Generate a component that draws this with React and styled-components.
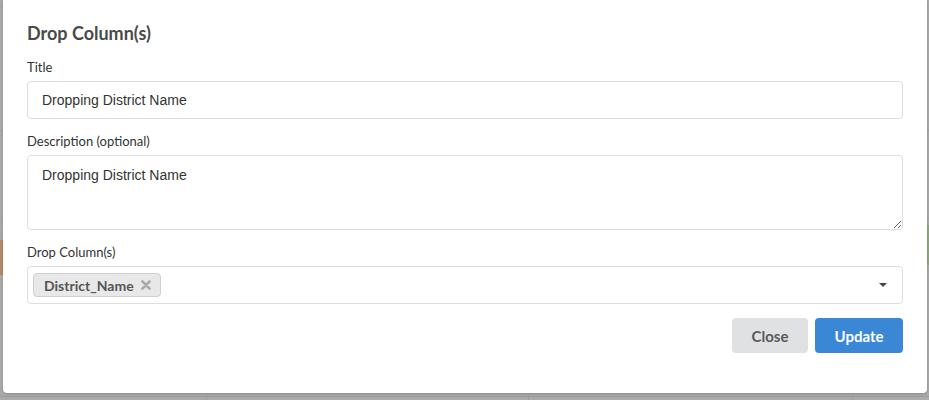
import React from 'react';
import styled, { createGlobalStyle } from 'styled-components';

const GlobalStyle = createGlobalStyle`
  html, body {
    margin: 0;
    padding: 0;
    width: 929px;
    height: 400px;
    overflow: hidden;
  }
  * {
    box-sizing: border-box;
  }
`;

const Backdrop = styled.div`
  position: relative;
  width: 929px;
  height: 400px;
  background: #aaaaaa;
  overflow: hidden;
`;

const BackStripe = styled.div`
  position: absolute;
  left: ${({ side }) => (side === 'right' ? '900px' : '0')};
  width: ${({ side }) => (side ? '29px' : '100%')};
  top: ${({ top }) => top}px;
  height: ${({ h }) => h || 1}px;
  background: ${({ color }) => color || '#9f9f9f'};
`;

const BottomRow = styled.div`
  position: absolute;
  left: 0;
  right: 0;
  top: 396px;
  height: 4px;
  display: grid;
  grid-template-columns: 206px 322px 324px 1fr;
  border-top: 1px solid #9c9c9c;
  div + div {
    border-left: 1px solid #9c9c9c;
  }
`;

const Modal = styled.div`
  position: absolute;
  left: 3px;
  top: 0;
  width: 924px;
  height: 393px;
  background: #ffffff;
  border-radius: 0 0 4px 4px;
  box-shadow: 0 1px 3px rgba(0, 0, 0, 0.2);
  padding: 20px 24px 0 24px;
  font-family: Lato, 'Noto Sans', sans-serif;
  color: #333333;
`;

const Heading = styled.h2`
  margin: 0 0 13px 0;
  font-size: 18px;
  line-height: 26px;
  font-weight: 700;
  color: #4a4a4a;
`;

const Field = styled.div`
  display: flex;
  flex-direction: column;
  margin-bottom: ${({ gap }) => gap}px;
`;

const Label = styled.label`
  font-size: 13px;
  line-height: 17px;
  color: #333333;
  margin-bottom: 5px;
`;

const TextInput = styled.input`
  height: 38px;
  width: 100%;
  border: 1px solid #dedede;
  border-radius: 4px;
  padding: 0 14px;
  font-family: 'Liberation Sans', Arial, sans-serif;
  font-size: 14px;
  color: #333333;
  outline: none;
`;

const TextArea = styled.textarea`
  display: block;
  height: 75px;
  width: 100%;
  border: 1px solid #dedede;
  border-radius: 4px;
  padding: 10px 14px;
  font-family: 'Liberation Sans', Arial, sans-serif;
  font-size: 14px;
  line-height: 18px;
  color: #333333;
  resize: vertical;
  outline: none;
`;

const Select = styled.div`
  height: 38px;
  width: 100%;
  border: 1px solid #dedede;
  border-radius: 4px;
  padding: 0 15px 0 5px;
  display: flex;
  align-items: center;
  justify-content: space-between;
`;

const Tag = styled.span`
  display: inline-flex;
  align-items: center;
  gap: 7px;
  height: 24px;
  padding: 0 9px 0 10px;
  background: #e8e8e8;
  border: 1px solid #cfcfcf;
  border-radius: 4px;
  font-size: 14px;
  font-weight: 700;
  color: #555555;
`;

const TagRemove = styled.svg`
  width: 10px;
  height: 10px;
  display: block;
`;

const Caret = styled.span`
  width: 0;
  height: 0;
  border-left: 4px solid transparent;
  border-right: 4px solid transparent;
  border-top: 4px solid #444444;
`;

const Actions = styled.div`
  display: flex;
  justify-content: flex-end;
  gap: 7px;
`;

const Button = styled.button`
  height: 35px;
  width: ${({ primary }) => (primary ? 88 : 76)}px;
  padding: 0;
  border: none;
  border-radius: 4px;
  background: ${({ primary }) => (primary ? '#3a87d5' : '#e0e1e2')};
  color: ${({ primary }) => (primary ? '#ffffff' : '#5a5a5a')};
  font-family: Lato, 'Noto Sans', sans-serif;
  font-size: 15px;
  font-weight: 700;
  cursor: pointer;
`;

export default function App() {
  return (
    <>
      <GlobalStyle />
      <Backdrop>
        <BackStripe top={130} color="#a2a2a2" />
        <BackStripe top={218} color="#a4a4a4" />
        <BackStripe top={236} color="#a4a4a4" />
        <BackStripe side="left" top={240} h={35} color="#b58a66" />
        <BackStripe side="right" top={225} h={40} color="#8fa77f" />
        <BottomRow>
          <div />
          <div />
          <div />
          <div />
        </BottomRow>
        <Modal>
          <Heading>Drop Column(s)</Heading>
          <Field gap={14}>
            <Label>Title</Label>
            <TextInput defaultValue="Dropping District Name" />
          </Field>
          <Field gap={14}>
            <Label>Description (optional)</Label>
            <TextArea defaultValue="Dropping District Name" />
          </Field>
          <Field gap={14}>
            <Label>Drop Column(s)</Label>
            <Select>
              <Tag>
                District_Name
                <TagRemove viewBox="0 0 10 10">
                  <path
                    d="M1.5 1.5 L8.5 8.5 M8.5 1.5 L1.5 8.5"
                    stroke="#a9a9a9"
                    strokeWidth="2.6"
                    strokeLinecap="round"
                  />
                </TagRemove>
              </Tag>
              <Caret />
            </Select>
          </Field>
          <Actions>
            <Button>Close</Button>
            <Button primary>Update</Button>
          </Actions>
        </Modal>
      </Backdrop>
    </>
  );
}
